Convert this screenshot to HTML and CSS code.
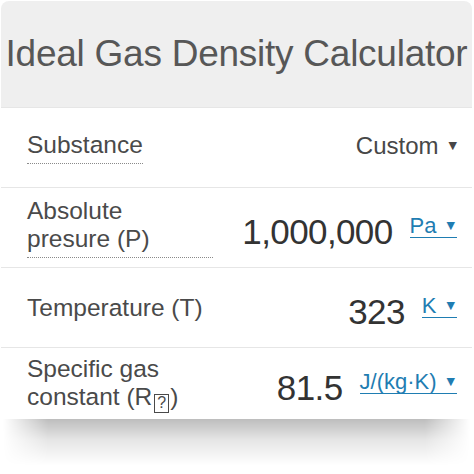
FILE: index.html
```html
<!DOCTYPE html>
<html>
<head>
<meta charset="utf-8">
<link rel="stylesheet" href="styles.css">
</head>
<body>
<div class="card">
  <div class="header"><h1 class="title">Ideal Gas Density Calculator</h1></div>
  <div class="row">
    <span class="label tip">Substance</span>
    <span class="select">Custom <span class="caret">▼</span></span>
  </div>
  <div class="row">
    <span class="label tip wide">Absolute<br>presure (P)</span>
    <span class="right"><span class="value">1,000,000</span><span class="unit">Pa<span class="ucaret">▼</span></span></span>
  </div>
  <div class="row">
    <span class="label">Temperature (T)</span>
    <span class="right"><span class="value">323</span><span class="unit">K<span class="ucaret">▼</span></span></span>
  </div>
  <div class="row last">
    <span class="label">Specific gas<br>constant (R<span class="nd">?</span>)</span>
    <span class="right"><span class="value">81.5</span><span class="unit">J/(kg·K)<span class="ucaret">▼</span></span></span>
  </div>
</div>
<div class="shadow"></div>
</body>
</html>
```
FILE: styles.css
```css
html, body {
  margin: 0;
  padding: 0;
  background: #fff;
}
body {
  font-family: "Liberation Sans", Arial, sans-serif;
}
.card {
  margin: 1px 2px 0 1px;
  width: 471px;
  border-radius: 8px 8px 0 0;
  background: #fff;
}
.shadow {
  height: 46px;
  margin: 0 4px 0 3px;
  background: linear-gradient(to bottom, rgba(0, 0, 0, 0.26), rgba(0, 0, 0, 0.1) 45%, rgba(0, 0, 0, 0));
  -webkit-mask-image: linear-gradient(to right, transparent, #000 45px, #000 calc(100% - 45px), transparent);
  mask-image: linear-gradient(to right, transparent, #000 45px, #000 calc(100% - 45px), transparent);
}
.header {
  height: 106px;
  background: #efefef;
  border-radius: 8px 8px 0 0;
  display: flex;
  align-items: center;
  justify-content: center;
}
.title {
  margin: 0;
  font-size: 37px;
  font-weight: normal;
  letter-spacing: -0.25px;
  color: #575757;
  white-space: nowrap;
}
.row {
  height: 79px;
  border-top: 1px solid #e6e6e6;
  display: flex;
  align-items: center;
  justify-content: space-between;
  padding: 0 15px 0 26px;
  background: #fff;
}
.row.last {
  height: 71px;
}
.label {
  font-size: 24.5px;
  line-height: 28px;
  color: #4a4a4a;
}
.tip {
  display: inline-block;
  border-bottom: 1px dotted #8a8a8a;
  padding-bottom: 4px;
}
.wide {
  width: 186px;
}
.nd {
  display: inline-block;
  box-sizing: border-box;
  width: 15px;
  height: 19px;
  border: 1.5px solid #4a4a4a;
  font-size: 16px;
  line-height: 16px;
  text-align: center;
  vertical-align: -3px;
  margin: 0 1px 0 2px;
}
.select {
  font-size: 24px;
  color: #474747;
  display: flex;
  align-items: center;
  margin-top: -4px;
}
.caret {
  font-family: "DejaVu Sans", sans-serif;
  font-size: 11px;
  margin-left: 10px;
  color: #474747;
}
.right {
  display: flex;
  align-items: center;
  padding-top: 8px;
}
.value {
  font-size: 35px;
  letter-spacing: -0.6px;
  color: #333;
}
.unit {
  margin-left: 17px;
  font-size: 22px;
  line-height: 22px;
  color: #1f7db2;
  border-bottom: 1px solid #1f7db2;
  display: inline-flex;
  align-items: center;
  margin-bottom: 10px;
}
.ucaret {
  font-family: "DejaVu Sans", sans-serif;
  font-size: 11px;
  margin-left: 10px;
  margin-right: 2px;
}
```
